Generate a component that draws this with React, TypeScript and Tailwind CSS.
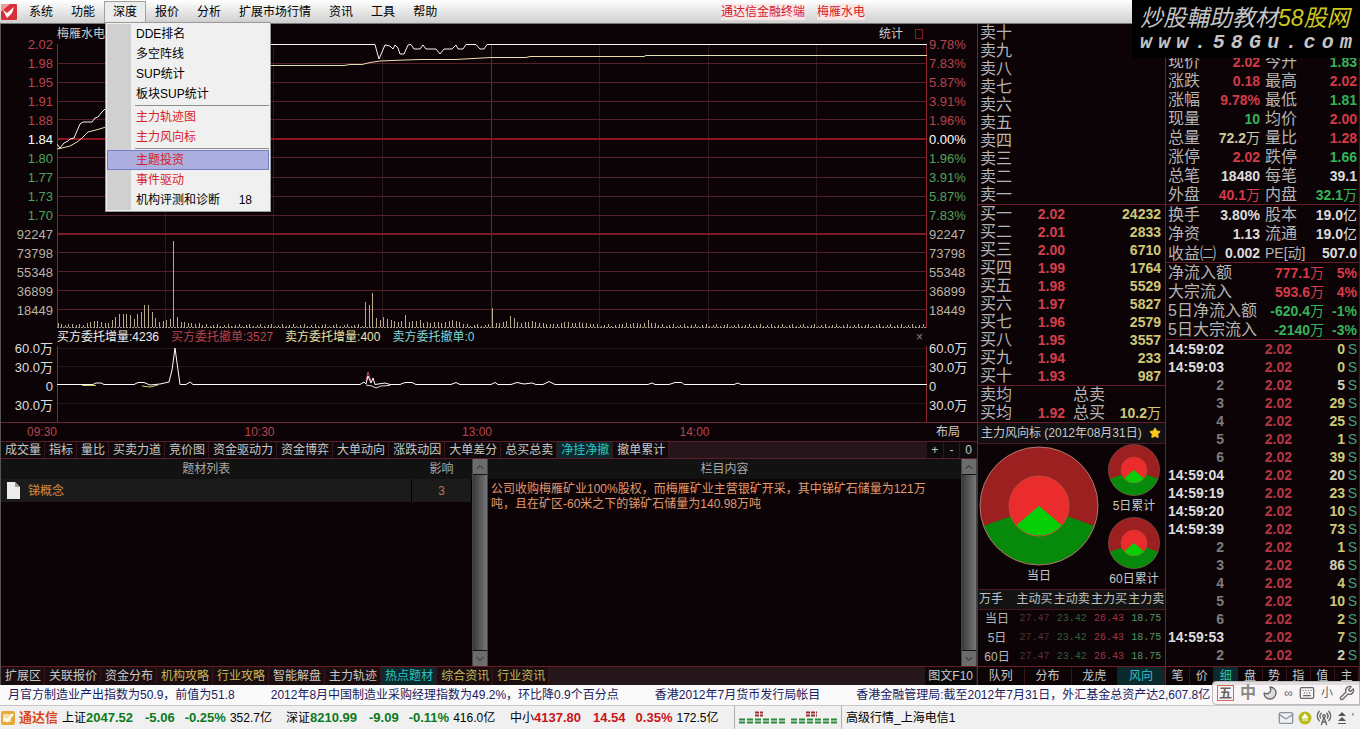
import { Fragment } from "react";
import { ChevronDown, ChevronUp, Keyboard, Mail, Moon, RadioTower, Star, Wrench } from "lucide-react";
import clsx from "clsx";

const menus = ["系统", "功能", "深度", "报价", "分析", "扩展市场行情", "资讯", "工具", "帮助"];

const depthMenu = [
  [{ label: "DDE排名" }, { label: "多空阵线" }, { label: "SUP统计" }, { label: "板块SUP统计" }],
  [
    { label: "主力轨迹图", hot: true },
    { label: "主力风向标", hot: true },
  ],
  [
    { label: "主题投资", hot: true, selected: true },
    { label: "事件驱动", hot: true },
    { label: "机构评测和诊断", key: "18" },
  ],
] as { label: string; hot?: boolean; selected?: boolean; key?: string }[][];

const RED = "text-[#b8444e]";
const GREEN = "text-[#4fa35c]";
const GREY = "text-[#b9b3a4]";

const axisRows = [
  ["2.02", "9.78%", RED],
  ["1.98", "7.83%", RED],
  ["1.95", "5.87%", RED],
  ["1.91", "3.91%", RED],
  ["1.88", "1.96%", RED],
  ["1.84", "0.00%", "text-white"],
  ["1.80", "1.96%", GREEN],
  ["1.77", "3.91%", GREEN],
  ["1.73", "5.87%", GREEN],
  ["1.70", "7.83%", GREEN],
  ["92247", "92247", GREY],
  ["73798", "73798", GREY],
  ["55348", "55348", GREY],
  ["36899", "36899", GREY],
  ["18449", "18449", GREY],
  ["", "", GREY],
  ["60.0万", "60.0万", "text-[#dddddd]"],
  ["30.0万", "30.0万", "text-[#dddddd]"],
  ["0", "0", "text-[#dddddd]"],
  ["30.0万", "30.0万", "text-[#dddddd]"],
];

// one bar per trading minute, everything not listed is background noise
const volumePeaks: Record<number, number[]> = {
  0: [4, 3, 2, 3, 3, 2, 3, 2, 4, 5, 6, 6, 5, 4, 4, 7],
  16: [10, 13, 13, 13, 12, 8, 13, 15, 22, 22, 15, 9, 5, 6, 7, 8, 86, 10, 5, 5, 4, 4, 3, 4],
  85: [25, 22, 34, 9, 7, 10, 8, 7, 6, 5, 6, 12, 5, 6, 6, 7, 4, 5, 4, 5, 5, 4, 5, 6, 7, 6, 5, 3],
  120: [19, 4, 4, 5, 6, 11, 9, 5, 4, 5, 5, 6, 5, 4, 4, 3, 3],
  138: [3, 4, 5, 5, 4, 4, 5, 4, 4, 3, 3],
  156: [3, 4, 3, 4, 4, 3, 4, 7, 4, 4],
};
const volumes = Array.from({ length: 240 }, (_, i) => 1 + ((i * 7) % 3));
for (const [start, values] of Object.entries(volumePeaks)) {
  values.forEach((v, i) => {
    volumes[Number(start) + i] = v;
  });
}
const volumePath = volumes.map((v, i) => `M${(58 + i * 3.62).toFixed(1)} 327V${327 - v}`).join("");

const legend = [
  ["买方委托增量:4236", "text-[#eeeeee]"],
  ["买方委托撤单:3527", "text-[#b8444e]"],
  ["卖方委托增量:400", "text-[#e8e4a8]"],
  ["卖方委托撤单:0", "text-[#7fd8d8]"],
];

const chartTabs = ["成交量", "指标", "量比", "买卖力道", "竞价图", "资金驱动力", "资金博弈", "大单动向", "涨跌动因", "大单差分", "总买总卖", "净挂净撤", "撤单累计"];

const infoTabs = [
  ["扩展区", "text-[#c8c8c8]"],
  ["关联报价", "text-[#c8c8c8]"],
  ["资金分布", "text-[#c8c8c8]"],
  ["机构攻略", "text-[#c4b860]"],
  ["行业攻略", "text-[#c4b860]"],
  ["智能解盘", "text-[#c8c8c8]"],
  ["主力轨迹", "text-[#c8c8c8]"],
  ["热点题材", "text-[#2fc4c4]"],
  ["综合资讯", "text-[#c4b860]"],
  ["行业资讯", "text-[#c4b860]"],
];

const numerals = ["一", "二", "三", "四", "五", "六", "七", "八", "九", "十"];

const bids = [
  ["2.02", "24232"],
  ["2.01", "2833"],
  ["2.00", "6710"],
  ["1.99", "1764"],
  ["1.98", "5529"],
  ["1.97", "5827"],
  ["1.96", "2579"],
  ["1.95", "3557"],
  ["1.94", "233"],
  ["1.93", "987"],
];

const UP = "text-[#d43a48]";
const DOWN = "text-[#35b35a]";
const FLAT = "text-[#dcdcdc]";
const CREAM = "text-[#cfc7a0]";

const quotes = [
  ["现价", "2.02", UP, "今开", "1.83", DOWN],
  ["涨跌", "0.18", UP, "最高", "2.02", UP],
  ["涨幅", "9.78%", UP, "最低", "1.81", DOWN],
  ["现量", "10", DOWN, "均价", "2.00", UP],
  ["总量", "72.2万", CREAM, "量比", "1.28", UP],
  ["涨停", "2.02", UP, "跌停", "1.66", DOWN],
  ["总笔", "18480", FLAT, "每笔", "39.1", FLAT],
  ["外盘", "40.1万", UP, "内盘", "32.1万", DOWN],
];

const fundamentals = [
  ["换手", "3.80%", FLAT, "股本", "19.0亿", FLAT],
  ["净资", "1.13", FLAT, "流通", "19.0亿", FLAT],
  ["收益㈡", "0.002", FLAT, "PE[动]", "507.0", FLAT],
];

const flows = [
  ["净流入额", "777.1万", "5%", UP],
  ["大宗流入", "593.6万", "4%", UP],
  ["5日净流入额", "-620.4万", "-1%", DOWN],
  ["5日大宗流入", "-2140万", "-3%", DOWN],
];

const ticks = [
  ["14:59:02", "0"],
  ["14:59:03", "0"],
  ["2", "5"],
  ["3", "29"],
  ["4", "25"],
  ["5", "1"],
  ["6", "39"],
  ["14:59:04", "20"],
  ["14:59:19", "23"],
  ["14:59:20", "10"],
  ["14:59:39", "73"],
  ["2", "1"],
  ["3", "86"],
  ["4", "4"],
  ["5", "10"],
  ["6", "2"],
  ["14:59:53", "7"],
  ["2", "2"],
];

const news = [
  "月官方制造业产出指数为50.9，前值为51.8",
  "2012年8月中国制造业采购经理指数为49.2%，环比降0.9个百分点",
  "香港2012年7月货币发行局帐目",
  "香港金融管理局:截至2012年7月31日，外汇基金总资产达2,607.8亿",
];

const indices = [
  ["上证", "2047.52", "-5.06", "-0.25%", "352.7亿", "text-[#0a7a1e]"],
  ["深证", "8210.99", "-9.09", "-0.11%", "416.0亿", "text-[#0a7a1e]"],
  ["中小", "4137.80", "14.54", "0.35%", "172.5亿", "text-[#c8141e]"],
];

// digits are bold, the 万 / 亿 unit is a larger regular glyph
function Num({ value, className }: { value: string; className: string }) {
  const unit = /[万亿]$/.test(value) ? value.slice(-1) : "";
  return (
    <span className={clsx("flex items-center justify-end text-sm leading-[18px] font-bold", className)}>
      {unit ? value.slice(0, -1) : value}
      {unit && <span className="font-normal">{unit}</span>}
    </span>
  );
}

function DepthMenu() {
  return (
    <div className="absolute top-[21px] left-px z-30 w-[166px] border border-[#9a9a9a] bg-[#f0f0f0] p-px text-black shadow">
      <div className="bg-[linear-gradient(to_right,#d0d0d0_24px,transparent_24px)]">
        {depthMenu.map((group, g) => (
          <Fragment key={g}>
            {g > 0 && <div className="my-px ml-7 h-px bg-[#8c8c8c]" />}
            {group.map((item) => (
              <button
                key={item.label}
                className={clsx(
                  "flex h-5 w-full items-center justify-between border pr-4 pl-7",
                  item.selected ? "border-[#6f7fc4] bg-[#adaee0]" : "border-transparent",
                  item.hot && "text-[#d81e28]",
                )}
              >
                {item.label}
                {item.key && <span>{item.key}</span>}
              </button>
            ))}
          </Fragment>
        ))}
      </div>
    </div>
  );
}

function MenuBar() {
  return (
    <header className="flex h-6 items-center border-b border-[#777777] bg-linear-to-b from-white to-[#cfcfcf] text-black">
      <svg viewBox="0 0 16 16" className="mr-[3px] ml-px h-4 w-4">
        <rect width="16" height="16" rx="1" fill="#d8303a" />
        <path d="M0 0h9L0 8z" fill="#f29a9a" />
        <path d="M2 6l4 3 7-6-2 6-5 5-2-4z" fill="#fff" />
      </svg>
      <nav className="flex">
        {menus.map((label) => (
          <div key={label} className="relative">
            <button
              className={clsx(
                "h-[22px] border px-2 whitespace-nowrap",
                label === "深度" ? "border-[#a0a0a0] bg-[#ececec]" : "border-transparent",
              )}
            >
              {label}
            </button>
            {label === "深度" && <DepthMenu />}
          </div>
        ))}
      </nav>
      <div className="flex flex-1 justify-center gap-3 pr-[220px] text-[#d0202a]">
        <span className="bg-[#fbe6e6]">通达信金融终端</span>
        <span className="bg-[#fbe6e6]">梅雁水电</span>
      </div>
    </header>
  );
}

function Axis({ side }: { side: 0 | 1 }) {
  return (
    <div className={clsx("shrink-0 pt-[11px] pb-[7px] text-[13px]", side === 0 ? "w-14 pr-1 text-right" : "w-[50px] pl-0.5")}>
      {axisRows.map((row, i) => (
        <div key={i} className={clsx("h-[19px] leading-[19px]", row[2])}>
          {row[side]}
        </div>
      ))}
    </div>
  );
}

function Chart() {
  return (
    <div className="flex">
      <Axis side={0} />
      <div className="flex min-w-0 flex-1 flex-col">
        <div className="flex h-5 items-center justify-between text-[#cccccc]">
          <span>梅雁水电</span>
          <span className="flex items-center gap-3 pr-1">
            统计
            <span className="h-2.5 w-2 border border-[#8a1c26]" />
          </span>
        </div>
        <svg viewBox="57 44 870 284" preserveAspectRatio="none" className="block h-[284px] w-full">
          <g shapeRendering="crispEdges" fill="none">
            <path d="M165.5 44V328M273.5 44V328M382.5 44V328M599.5 44V328M708.5 44V328M816.5 44V328" stroke="#2c1a1d" />
            <path d="M491.5 44V328" stroke="#4e3438" />
            <path
              d="M57 63.5H927M57 82.5H927M57 101.5H927M57 119.5H927M57 157.5H927M57 177.5H927M57 196.5H927M57 215.5H927M57 252.5H927M57 271.5H927M57 290.5H927M57 309.5H927"
              stroke="#54202a"
            />
            <path d="M57 139H927" stroke="#8c1420" strokeWidth="2" />
            <path d="M57 234H927" stroke="#7a1a22" strokeWidth="2" />
            <path d="M57.5 44V328M926.5 44V328" stroke="#8a2430" />
            <path d="M57 327.5H927" stroke="#a8988c" strokeDasharray="2 1" />
            <path d={volumePath} stroke="#b5aa8c" />
          </g>
          <g fill="none" strokeLinejoin="round">
            <path
              d="M57 149L62 148L70 146L77 142L82 138L88 132L96 130L106 127L150 90L200 72L271 65.5H344L350 64.5H362L370 62.5L380 61L405 60L420 59.5H455L491 57.5H526L530 56.5H644L646 55.5H927"
              stroke="#e8dcb0"
            />
            <path
              d="M57 144L60 148L64 143L68 141L70 139L74 138L77 131L80 124L83 122H92L95 118L98 117L102 112L106 108L130 80L160 60L200 50L230 44.5H375L377 52L379 59L382 52L385 45L390 46L393 49L395 45L398 48L400 54H404L408 45L411 44.5L414 49H420L423 45L426 49H436L440 54L444 49H452L456 45L458 49H463L466 44.5H476L480 49H484L487 44.5H927"
              stroke="#f4f4f4"
            />
          </g>
        </svg>
        <div className="flex h-[18px] items-center gap-3 whitespace-nowrap">
          {legend.map(([text, color]) => (
            <span key={text} className={color}>
              {text}
            </span>
          ))}
          <button className="mr-1 ml-auto text-[#888888]">×</button>
        </div>
        <svg viewBox="57 346 870 76" preserveAspectRatio="none" className="block h-[76px] w-full">
          <path d="M57 348.5H927M57 366.5H927M57 403.5H927" stroke="#26151a" shapeRendering="crispEdges" />
          <path d="M57.5 346V422M926.5 346V422" stroke="#8a2430" shapeRendering="crispEdges" />
          <path d="M366 381L368 372L371 381" stroke="#c8505a" fill="none" />
          <path d="M82 385.5H96M142 386L150 387L158 385" stroke="#cfc060" fill="none" />
          <path
            d="M57 384.5H93L96 383H101L104 384.5H134L138 382.5H144L150 385L160 384L169 382L172 370L175 348L178 370L180 384.5H186L190 382L193 384.5H360L364 382L366 384L368 376L371 383L373 378L375 384.5L385 383L390 384.5H400L405 382.5H412L416 384.5H451L456 382.5L460 384.5H491L495 382.5L498 384.5H511L517 382.5L524 384L532 383L536 384.5H543L549 381.5L555 384.5H648L652 383L655 384.5H669L675 382.5H682L684 384.5H734L738 383L741 384.5H927"
            stroke="#fff"
            fill="none"
          />
          <path d="M366 385L372 386L376 388L381 386L390 385.5" stroke="#ddd" fill="none" />
        </svg>
      </div>
      <Axis side={1} />
    </div>
  );
}

function ScrollBar() {
  return (
    <div className="flex w-4 shrink-0 flex-col gap-px border-x border-[#444444] bg-[#111111] text-[#222222]">
      <button aria-label="向上" className="flex h-[15px] items-center justify-center bg-[#6c6c6c]">
        <ChevronUp className="h-3 w-3" />
      </button>
      <div className="flex-1 bg-linear-to-r from-[#3a3a3a] to-[#777777]" />
      <button aria-label="向下" className="flex h-[15px] items-center justify-center bg-[#6c6c6c]">
        <ChevronDown className="h-3 w-3" />
      </button>
    </div>
  );
}

function Topics() {
  return (
    <div className="flex flex-1">
      <div className="flex w-[487px] shrink-0">
        <div className="flex-1">
          <table className="w-full">
            <thead>
              <tr className="h-5 bg-[#121212] text-[#a8a8a8]">
                <th className="font-normal">题材列表</th>
                <th className="w-[60px] font-normal">影响</th>
              </tr>
            </thead>
            <tbody>
              <tr className="h-[23px] bg-[#1b1b1b] text-[#d98840]">
                <td>
                  <div className="flex items-center gap-2 pl-[5px]">
                    <svg viewBox="0 0 14 17" className="h-[17px] w-3.5">
                      <path d="M1 0h8l5 5v12H1z" fill="#ececec" />
                      <path d="M9 0v5h5z" fill="#9a9a9a" />
                    </svg>
                    锑概念
                  </div>
                </td>
                <td className="border-x border-black text-center text-[#b07a50]">3</td>
              </tr>
            </tbody>
          </table>
        </div>
        <ScrollBar />
      </div>
      <div className="min-w-0 flex-1">
        <h2 className="h-5 bg-[#121212] text-center leading-5 text-[#a8a8a8]">栏目内容</h2>
        <p className="px-[3px] pt-[3px] leading-[15px] text-[#e09a70]">
          公司收购梅雁矿业100%股权，而梅雁矿业主营银矿开采，其中锑矿石储量为121万
          <br />
          吨，且在矿区-60米之下的锑矿石储量为140.98万吨
        </p>
      </div>
      <ScrollBar />
    </div>
  );
}

function LeftPane() {
  return (
    <section className="flex min-w-0 flex-1 flex-col border-l border-[#555555]">
      <Chart />
      <div className="flex h-[19px] items-center border-t border-[#6a2a34] text-[#b8444e]">
        <span className="w-14 text-right">09:30</span>
        <div className="grid flex-1 grid-cols-8 text-right">
          <span className="col-start-2">10:30</span>
          <span className="col-start-4">13:00</span>
          <span className="col-start-6">14:00</span>
        </div>
        <button className="w-[50px] pr-2 text-[#cccccc]">布局</button>
      </div>
      <div className="flex h-[18px] border-y border-[#5c1c2a] bg-[#24161a] text-[#c8c8c8]">
        {chartTabs.map((tab) => (
          <button
            key={tab}
            className={clsx("border-r border-[#3a141c] pr-[3px] pl-1 whitespace-nowrap", tab === "净挂净撤" ? "bg-[#0a2a2e] text-[#2fc4c4]" : "bg-[#0e0a0b]")}
          >
            {tab}
          </button>
        ))}
        <div className="ml-auto grid w-[50px] grid-cols-3 bg-[#0e0a0b]">
          <button className="border-r border-[#3a141c]">+</button>
          <button className="border-r border-[#3a141c]">-</button>
          <button>0</button>
        </div>
      </div>
      <Topics />
      <div className="flex h-[19px] border-t border-[#6a1c22] bg-[#24161a]">
        {infoTabs.map(([tab, color]) => (
          <button
            key={tab}
            className={clsx("border-r border-[#3a141c] pr-[3px] pl-1 whitespace-nowrap", tab === "热点题材" ? "bg-[#0a2a2e]" : "bg-[#1a0e10]", color)}
          >
            {tab}
          </button>
        ))}
        <button className="mr-px ml-auto bg-[#0a0a0a] px-[3px] text-[#cccccc]">图文F10</button>
      </div>
    </section>
  );
}

function Vane({ className }: { className: string }) {
  return (
    <svg viewBox="0 0 120 120" className={className}>
      <circle cx="60" cy="60" r="59" fill="#9c2020" />
      <path d="M60 60L4.6 80A59 59 0 0 0 115.4 80Z" fill="#078a0c" />
      <circle cx="60" cy="60" r="30" fill="#ea2c2c" />
      <path d="M60 60L37 79.5A30 30 0 0 0 83 79.5Z" fill="#06cf0a" />
      <circle cx="60" cy="60" r="59" fill="none" stroke="#a87a70" />
      <circle cx="60" cy="60" r="30" fill="none" stroke="#c44a3a" />
    </svg>
  );
}

function OrderBook() {
  return (
    <section className="flex w-[189px] shrink-0 flex-col border-x border-[#7c1c2c]">
      <table className="w-full border-b border-[#6a1c28] text-base leading-[18px] text-[#b4b4b4]">
        <tbody>
          {[...numerals].reverse().map((n) => (
            <tr key={n} className="h-[18px]">
              <td className="pl-0.5">卖{n}</td>
            </tr>
          ))}
        </tbody>
      </table>
      <table className="w-full border-b border-[#6a1c28] text-base leading-[18px] text-[#b4b4b4]">
        <tbody>
          {bids.map(([price, volume], i) => (
            <tr key={i} className="h-[18px]">
              <td className="w-[50px] pl-0.5">买{numerals[i]}</td>
              <td>
                <Num value={price} className="w-[37px] text-[#cf3f4c]" />
              </td>
              <td className="pr-1">
                <Num value={volume} className="text-[#cfc878]" />
              </td>
            </tr>
          ))}
        </tbody>
      </table>
      <div className="grid grid-cols-[50px_37px_40px_1fr] border-b border-[#6a1c28] pr-1 text-base leading-[18px] text-[#b4b4b4]">
        <span className="pl-0.5">卖均</span>
        <span />
        <span className="pl-2 whitespace-nowrap">总卖</span>
        <span />
        <span className="pl-0.5">买均</span>
        <Num value="1.92" className="text-[#cf3f4c]" />
        <span className="pl-2 whitespace-nowrap">总买</span>
        <Num value="10.2万" className="text-[#cfc878]" />
      </div>
      <div className="flex h-5 items-center justify-between bg-[#121012] pr-1 pl-[3px] text-[#c8c8c8]">
        <span>主力风向标 (2012年08月31日)</span>
        <Star className="h-3 w-3 fill-[#ffc81e] text-[#ffc81e]" />
      </div>
      <div className="flex h-[147px] justify-between border-y border-[#4a1620] pr-[5px] pl-px text-[#c8c8c8]">
        <figure className="flex flex-col items-center gap-0.5 pt-0.5">
          <Vane className="h-30 w-30" />
          <figcaption>当日</figcaption>
        </figure>
        <div className="flex flex-col">
          <figure className="flex h-[73px] flex-col items-center gap-0.5">
            <Vane className="h-[52px] w-[52px]" />
            <figcaption>5日累计</figcaption>
          </figure>
          <figure className="flex h-[72px] flex-col items-center gap-0.5">
            <Vane className="h-[52px] w-[52px]" />
            <figcaption>60日累计</figcaption>
          </figure>
        </div>
      </div>
      <table className="w-full text-center text-[#b8b8b8]">
        <thead>
          <tr className="h-[19px] border-b border-[#4a1620] bg-[#141414] text-[#c0c0c0]">
            <th className="w-[38px] pl-px text-left font-normal">万手</th>
            <th className="p-0 font-normal">主动买</th>
            <th className="p-0 font-normal">主动卖</th>
            <th className="p-0 font-normal">主力买</th>
            <th className="p-0 font-normal">主力卖</th>
          </tr>
        </thead>
        <tbody>
          {["当日", "5日", "60日"].map((day) => (
            <tr key={day} className="h-[19px] font-['Liberation_Mono',monospace] text-[10px]">
              <td className="font-['Liberation_Sans','Noto_Sans_CJK_SC',sans-serif] text-xs">{day}</td>
              <td className="text-[#54323a]">27.47</td>
              <td className="text-[#33603c]">23.42</td>
              <td className="text-[#a03444]">26.43</td>
              <td className="text-[#569664]">18.75</td>
            </tr>
          ))}
        </tbody>
      </table>
      <div className="mt-auto grid h-[19px] grid-cols-4 border-t border-[#6a1c22] text-[#c8c8c8]">
        {["队列", "分布", "龙虎", "风向"].map((tab) => (
          <button key={tab} className={clsx("border-r border-[#3a141c]", tab === "风向" && "bg-[#0a2a2e] text-[#2fc4c4]")}>
            {tab}
          </button>
        ))}
      </div>
    </section>
  );
}

function QuoteGrid({ rows }: { rows: string[][] }) {
  return (
    <div className="border-b border-[#6a1c28]">
      {rows.map(([l1, v1, c1, l2, v2, c2]) => (
        <div key={l1} className="grid h-[19px] grid-cols-2 items-center gap-x-[5px] px-0.5 text-base leading-[19px] whitespace-nowrap">
          <div className="flex justify-between">
            <span>{l1}</span>
            <Num value={v1} className={c1} />
          </div>
          <div className="flex justify-between">
            <span className={l2.startsWith("PE") ? "text-sm" : ""}>{l2}</span>
            <Num value={v2} className={c2} />
          </div>
        </div>
      ))}
    </div>
  );
}

function QuotePane() {
  return (
    <section className="flex w-[194px] shrink-0 flex-col border-r border-[#4a1620] pt-7 text-[#b4b4b4]">
      <QuoteGrid rows={quotes} />
      <QuoteGrid rows={fundamentals} />
      <div className="border-b border-[#6a1c28]">
        {flows.map(([label, amount, pct, color]) => (
          <div key={label} className="flex h-[19px] items-center px-0.5 text-base leading-[19px] whitespace-nowrap">
            <span>{label}</span>
            <Num value={amount} className={clsx("ml-auto", color)} />
            <Num value={pct} className={clsx("w-[33px]", color)} />
          </div>
        ))}
      </div>
      <table className="w-full text-sm leading-[18px] font-bold">
        <tbody>
          {ticks.map(([time, volume], i) => (
            <tr key={i} className="h-[18px] text-right">
              <td className={clsx("w-[58px]", time.length > 1 ? "text-[#dcdcdc]" : "text-[#7c7c7c]")}>{time}</td>
              <td className="w-[68px] text-[#b83644]">2.02</td>
              <td className={clsx("w-[53px]", i % 5 === 2 ? "text-[#d0cfb8]" : "text-[#cfc878]")}>{volume}</td>
              <td className="pr-0.5 font-normal text-[#46a07a]">S</td>
            </tr>
          ))}
        </tbody>
      </table>
      <div className="mt-auto grid h-[19px] grid-cols-8 border-t border-[#6a1c22] text-[#c8c8c8]">
        {["笔", "价", "细", "盘", "势", "指", "值", "主"].map((tab) => (
          <button key={tab} className={clsx("border-r border-[#3a141c]", tab === "细" && "bg-[#0a2a2e] text-[#2fc4a4]")}>
            {tab}
          </button>
        ))}
      </div>
    </section>
  );
}

function Watermark() {
  return (
    <div className="absolute top-0 right-0 z-20 h-[58px] w-[228px] bg-black px-2 pt-1 text-[#c4c4c4] italic">
      <div className="text-[23px] leading-7 whitespace-nowrap">
        炒股輔助教材<span className="text-[#cfc81e]">58股网</span>
      </div>
      <div className="flex justify-between font-['Liberation_Mono',monospace] text-xl leading-[22px] font-bold">
        {"www.58Gu.com".split("").map((c, i) => (
          <span key={i}>{c}</span>
        ))}
      </div>
    </div>
  );
}

function ImeBar() {
  return (
    <div className="absolute -top-1 right-0 flex h-6 w-[148px] items-center justify-between rounded-l border border-[#bbbbbb] bg-[#f8f4f6]/90 px-1 text-[#666666]">
      <button className="border border-[#d06a5a] px-px text-[13px] leading-[14px] font-bold">五</button>
      <button className="text-base font-bold text-[#8a8a8a]">中</button>
      <Moon className="h-4 w-4 -scale-x-100 fill-[#dddddd]" />
      <span>∞</span>
      <Keyboard className="h-4 w-4" />
      <button>小</button>
      <Wrench className="h-4 w-4" />
    </div>
  );
}

function StatusBar() {
  return (
    <footer className="flex h-[25px] items-center border-b border-[#333333] bg-[#f0f0f0] whitespace-nowrap text-black">
      <svg viewBox="0 0 16 16" className="mr-[3px] h-4 w-4">
        <rect x="1" y="1" width="14" height="14" rx="2" fill="#e8a93a" />
        <path d="M3 4h8v8H3z" fill="#f8e0a0" />
        <path d="M4 8l3 3 6-7" fill="none" stroke="#fff" strokeWidth="2" />
      </svg>
      <span className="mr-1 text-[13px] font-bold text-[#d8481c]">通达信</span>
      {indices.map(([name, value, change, pct, amount, color]) => (
        <div key={name} className="flex w-56 items-center">
          {name}
          <span className={clsx("text-[13px] font-bold", color)}>{value}</span>
          <span className={clsx("ml-3 text-[13px] font-bold", color)}>{change}</span>
          <span className={clsx("mr-1 ml-2.5 text-[13px] font-bold", color)}>{pct}</span>
          {amount}
        </div>
      ))}
      <div className="flex h-full items-center border-x border-[#b0b0b0] px-1">
        <svg viewBox="0 0 98 14" className="h-3.5 w-[98px]">
          <path d="M0 8.5H46M0 11.5H46M52 8.5H98M52 11.5H98" stroke="#2c8a3c" strokeWidth="2" strokeDasharray="6 2" />
          <path d="M16 1.5H24M16 4.5H24M67 1.5H78M67 4.5H78" stroke="#9c3030" strokeWidth="2" strokeDasharray="4 1" />
        </svg>
      </div>
      <span className="pl-1">高级行情_上海电信1</span>
      <div className="ml-auto flex items-center gap-1 pr-1.5 text-[#666666]">
        <Mail className="h-4 w-4 text-[#8a94a0]" />
        <svg viewBox="0 0 14 14" className="h-3.5 w-3.5">
          <circle cx="7" cy="7" r="6.5" fill="#b8bc18" />
          <path d="M7 3l3 4H4zM4 9h6" fill="#fff" stroke="#fff" />
        </svg>
        <RadioTower className="h-4 w-4" />
        <svg viewBox="0 0 12 14" className="h-3.5 w-3">
          <path d="M6 1l4 4H2zM6 6l4 4H2z" fill="#555" />
          <path d="M2 12.5h8" stroke="#555" />
        </svg>
        <span>'</span>
      </div>
    </footer>
  );
}

export default function App() {
  return (
    <div className="relative flex min-h-screen flex-col overflow-hidden bg-[#0c0306] font-['Liberation_Sans','Noto_Sans_CJK_SC',sans-serif] text-xs">
      <MenuBar />
      <main className="flex flex-1">
        <LeftPane />
        <OrderBook />
        <QuotePane />
      </main>
      <div className="relative bg-[#fafafa] text-[#1a1a5e]">
        <div className="flex h-[21px] items-center gap-9 overflow-hidden border-b border-[#c8c8c8] pl-2 whitespace-nowrap">
          {news.map((item) => (
            <a key={item} href="#">
              {item}
            </a>
          ))}
        </div>
        <ImeBar />
      </div>
      <StatusBar />
      <Watermark />
    </div>
  );
}
